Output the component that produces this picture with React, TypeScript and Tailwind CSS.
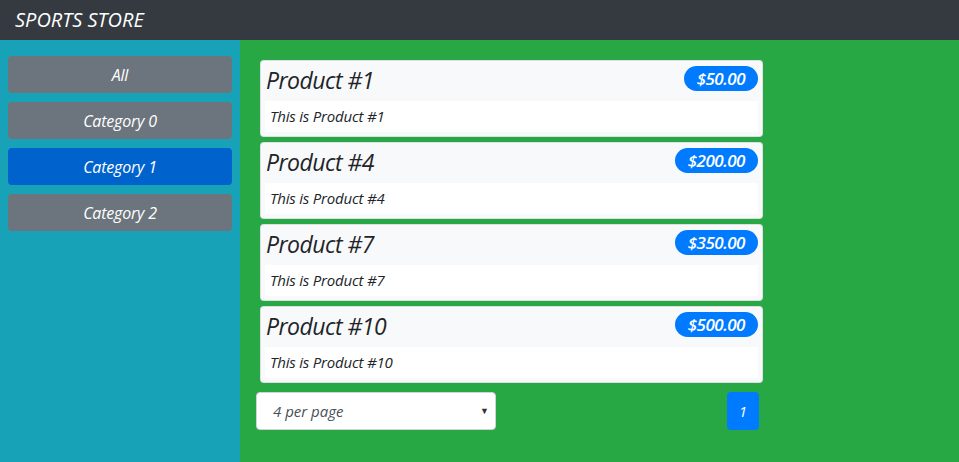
import React from 'react';

const products = [
  { id: 1, price: '$50.00' },
  { id: 4, price: '$200.00' },
  { id: 7, price: '$350.00' },
  { id: 10, price: '$500.00' },
];

const categories = ['All', 'Category 0', 'Category 1', 'Category 2'];

export default function App() {
  return (
    <div className="w-[959px] h-[462px] flex flex-col italic font-['Open_Sans',sans-serif] overflow-hidden">
      <div className="h-10 bg-[#343a40] flex items-center px-[15px] shrink-0">
        <span className="text-white text-[20px]">SPORTS STORE</span>
      </div>
      <div className="flex flex-1">
        <div className="w-[240px] bg-[#17a2b8] px-2 pt-4 flex flex-col gap-[9px]">
          {categories.map((c) => (
            <button
              key={c}
              className={`h-[37px] rounded text-white text-[16px] tracking-[-0.2px] ${
                c === 'Category 1' ? 'bg-[#0062cc]' : 'bg-[#6c757d]'
              }`}
            >
              {c}
            </button>
          ))}
        </div>
        <div className="flex-1 bg-[#28a745] pt-4 pl-4">
          <div className="w-[511px] flex flex-col">
            {products.map((p) => (
              <div
                key={p.id}
                className="mx-1 mt-1 mb-[1px] h-[77px] bg-[#f8f9fa] border border-black/10 rounded px-1 pt-1 pb-1 flex flex-col"
              >
                <div className="flex items-start justify-between h-[36px]">
                  <span className="text-[23px] leading-[30px] text-[#212529] tracking-[-0.5px] pl-[1px]">
                    Product #{p.id}
                  </span>
                  <span className="bg-[#007bff] text-white font-semibold text-[17px] leading-[25px] h-[25px] px-[13px] rounded-full tracking-[-0.5px] mt-[1px]">
                    {p.price}
                  </span>
                </div>
                <div className="bg-white flex-1 px-[5px] flex items-center text-[15px] text-[#212529] tracking-[-0.2px]">
                  This is Product #{p.id}
                </div>
              </div>
            ))}
            <div className="flex items-start justify-between mt-[8px] pr-[8px]">
              <div className="relative w-[240px] h-[38px] bg-white border border-[#ced4da] rounded flex items-center pl-4 text-[15px] text-[#495057]">
                4 per page
                <span className="absolute right-[6px] top-[11px] text-[9px] not-italic text-[#333]">▼</span>
              </div>
              <button className="w-8 h-[38px] bg-[#007bff] rounded-sm text-white text-[15px]">1</button>
            </div>
          </div>
        </div>
      </div>
    </div>
  );
}
